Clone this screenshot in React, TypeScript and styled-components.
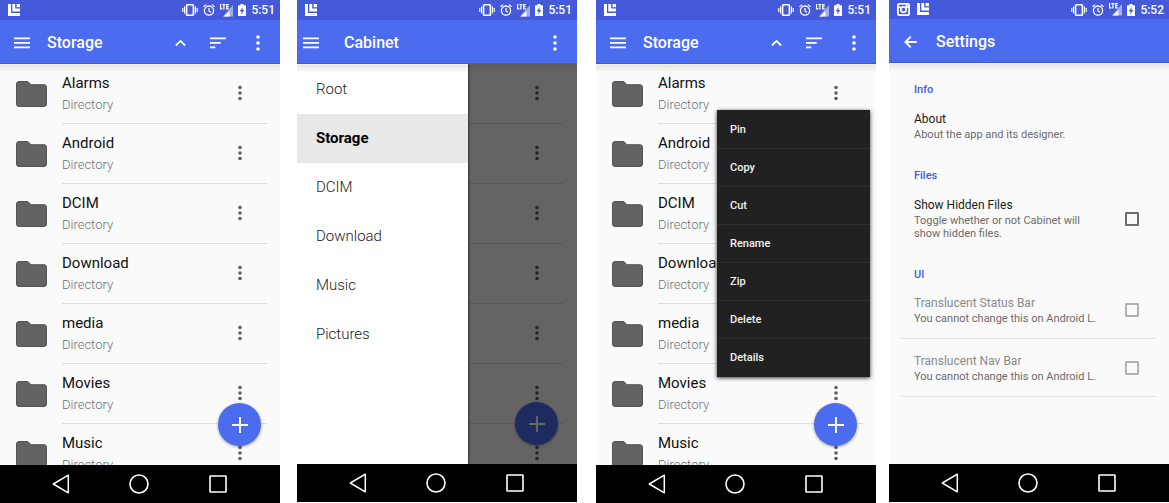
import React from "react";
import styled, { createGlobalStyle } from "styled-components";

const GlobalStyle = createGlobalStyle`
  *, *::before, *::after { box-sizing: border-box; }
  body { margin: 0; background: #fff; font-family: Roboto, "Liberation Sans", sans-serif; }
  button { padding: 0; border: 0; background: none; color: inherit; font: inherit; cursor: pointer; }
  ul, h1, h2, p { margin: 0; padding: 0; list-style: none; }
  svg { display: block; }
`;

const blue = "#4c6cf0";
const topShadow = "linear-gradient(#fff 0, #e6e6e6 1px, rgba(250, 250, 250, 0) 9px)";

const Gallery = styled.main`
  display: grid;
  grid-template-columns: 1fr 17px 1fr 19px 1fr 13px 1fr;
  height: 100vh;
`;

const Phone = styled.section<{ $column: number; $short?: boolean }>`
  grid-column: ${(p) => p.$column};
  display: flex;
  flex-direction: column;
  min-width: 0;
  min-height: 0;
  margin-bottom: ${(p) => (p.$short ? 1 : 0)}px;
`;

const StatusBar = styled.div<{ $height: number }>`
  display: flex;
  align-items: center;
  gap: 5px;
  height: ${(p) => p.$height}px;
  padding: 0 5px 0 8px;
  background: #445adb;
  color: #fff;
`;

const Notifications = styled.div`
  display: flex;
  gap: 7px;
  margin-right: auto;
`;

const Clock = styled.time`
  font-size: 12px;
  font-weight: 500;
  line-height: 16px;
`;

const Toolbar = styled.header`
  display: flex;
  align-items: center;
  height: 44px;
  padding-top: 1px;
  background: ${blue};
  box-shadow: inset 0 -1px #3f58dc;
  color: #fff;
`;

const NavButton = styled.button<{ $inset: number }>`
  flex: none;
  width: 47px;
  height: 40px;
  padding-left: ${(p) => p.$inset}px;
`;

const ScreenTitle = styled.h1`
  flex: 1;
  font-size: 16px;
  font-weight: 500;
  line-height: 20px;
`;

const ToolButton = styled.button`
  display: grid;
  place-items: center;
  flex: none;
  width: 37px;
  height: 40px;
`;

const OverflowButton = styled(ToolButton)`
  width: 44px;
`;

const Body = styled.div`
  position: relative;
  flex: 1;
  min-height: 0;
  overflow: hidden;
  background: ${topShadow}, #fafafa;
`;

const Row = styled.li`
  display: flex;
  align-items: center;
  gap: 15px;
  height: 60px;
  padding: 0 13px 0 16px;
`;

const RowContent = styled.div`
  display: flex;
  flex: 1;
  align-items: center;
  justify-content: space-between;
  height: 60px;
  padding-bottom: 2px;
  border-bottom: 1px solid #dedede;
`;

const FileName = styled.p`
  font-size: 15px;
  line-height: 20px;
  color: #111;
`;

const FileKind = styled.p`
  padding-top: 4px;
  font-size: 13px;
  font-weight: 300;
  line-height: 16px;
  color: #707070;
`;

const RowMenuButton = styled.button`
  display: grid;
  place-items: center;
  width: 54px;
  height: 40px;
  color: #5f5f5f;
`;

const Fab = styled.button`
  position: absolute;
  right: 19px;
  bottom: 19px;
  display: grid;
  place-items: center;
  width: 43px;
  height: 43px;
  border-radius: 50%;
  background: ${blue};
  color: #fff;
  box-shadow: 0 1px 3px rgba(0, 0, 0, 0.4);
`;

const Scrim = styled.div`
  position: absolute;
  inset: 0;
  background: rgba(0, 0, 0, 0.6);
`;

const Drawer = styled.nav`
  position: absolute;
  inset: 0 auto 0 0;
  width: 171px;
  padding-top: 1px;
  background: ${topShadow}, #fff;
  box-shadow: 1px 0 2px rgba(0, 0, 0, 0.5);
`;

const DrawerLink = styled.a<{ $active?: boolean }>`
  display: block;
  padding-left: 19px;
  background: ${(p) => (p.$active ? "#e8e8e8" : "transparent")};
  color: ${(p) => (p.$active ? "#000" : "#222")};
  font-size: 15px;
  font-weight: ${(p) => (p.$active ? 700 : 300)};
  line-height: 49px;
  text-decoration: none;
`;

const Popup = styled.div`
  position: absolute;
  top: 46px;
  right: 6px;
  width: 153px;
  padding-bottom: 1px;
  background: #212121;
  box-shadow: 0 1px 4px rgba(0, 0, 0, 0.8);
`;

const PopupItem = styled.button`
  display: block;
  width: 100%;
  height: 38px;
  padding-left: 13px;
  color: #f2f2f2;
  font-size: 11px;
  font-weight: 500;
  text-align: left;

  & + & { border-top: 1px solid #2e2e2e; }
`;

const Preferences = styled(Body)`
  padding-top: 5px;
`;

const GroupTitle = styled.h2`
  padding: 15px 25px 0;
  color: #3f5ce6;
  font-size: 11px;
  font-weight: 500;
  line-height: 14px;
`;

const Preference = styled.div<{ $divided?: boolean }>`
  display: flex;
  align-items: center;
  gap: 26px;
  margin: 0 13px 0 12px;
  padding: ${(p) => (p.$divided ? "13px 17px 13px 13px" : "14px 17px 13px 13px")};
  border-bottom: ${(p) => (p.$divided ? "1px solid #e2e2e2" : "0")};

  & + & { padding-top: 14px; }
`;

const PreferenceText = styled.label<{ $disabled?: boolean }>`
  flex: 1;
  color: ${(p) => (p.$disabled ? "#8a8a8a" : "#1a1a1a")};
  font-size: 12px;
  line-height: 16px;
`;

const Summary = styled.span`
  display: block;
  padding-top: 1px;
  color: #6a6a6a;
  font-size: 11px;
  line-height: 13px;
`;

const Checkbox = styled.input`
  appearance: none;
  flex: none;
  width: 14px;
  height: 14px;
  margin: 0;
  border: 2px solid #6c6c6c;
  border-radius: 1px;

  &:disabled { border-color: #b2b2b2; }
`;

const SystemNav = styled.footer`
  display: grid;
  grid-template-columns: repeat(3, 1fr);
  flex: none;
  height: 38px;
  padding: 0 23px 0 22px;
  background: #000;
  color: #fff;
`;

const SystemButton = styled.button`
  display: grid;
  place-items: center;
`;

const BoardIcon = () => (
  <svg width="12" height="12" viewBox="0 0 12 12" fill="currentColor" aria-hidden="true">
    <path d="M0 0h3v9h9v3H0z" />
    <path d="M4.300 0h2.900v4.600H12v2.900H4.300z" />
    <path d="M8.600 0H12v3.200H8.600z" />
  </svg>
);

const CameraIcon = () => (
  <svg width="13" height="13" viewBox="0 0 13 13" fill="none" stroke="currentColor" aria-hidden="true">
    <rect x="0.9" y="0.9" width="11.2" height="11.2" rx="1.2" strokeWidth="1.8" />
    <path d="M1 4.2h3.2M8.800 4.200H12" strokeWidth="1.4" />
    <circle cx="6.5" cy="6.600" r="2.700" strokeWidth="1.700" />
    <path d="M8.600 3h2.200" strokeWidth="2" />
  </svg>
);

const VibrateIcon = () => (
  <svg width="16" height="12" viewBox="0 0 16 12" fill="none" stroke="currentColor" aria-hidden="true">
    <rect x="4.600" y="0.800" width="6.800" height="10.400" rx="0.800" strokeWidth="1.600" />
    <path d="M2.600 2.500v7M13.400 2.500v7M0.800 4v4M15.200 4v4" strokeWidth="1.200" />
  </svg>
);

const AlarmIcon = () => (
  <svg width="12" height="12" viewBox="0 0 12 12" fill="none" stroke="currentColor" aria-hidden="true">
    <circle cx="6" cy="6.600" r="4.600" strokeWidth="1.300" />
    <path d="M6 4v3l2 1.200M0.500 2.800L3.200 0.600M11.500 2.800L8.800 0.600" strokeWidth="1.200" />
  </svg>
);

const SignalIcon = () => (
  <svg width="13" height="13" viewBox="0 0 13 13" aria-hidden="true">
    <path d="M13 1v11.500H3z" fill="currentColor" opacity="0.5" />
    <path d="M9.500 7v5.500H3.500z" fill="currentColor" />
    <path d="M0.600 0v4.900h1.900M2.400 0.600h3M3.900 0.600v4.800M8.800 0.600H6.700v4.300h2.100M6.700 2.700h1.900" fill="none" stroke="currentColor" strokeWidth="1.200" />
  </svg>
);

const BatteryIcon = () => (
  <svg width="8" height="12" viewBox="0 0 8 12" fill="currentColor" aria-hidden="true">
    <path d="M2.400 0h3.200v1.200H7.400q.6 0 .6.6v9.600q0 .6-.6.6H.6q-.6 0-.6-.6V1.800q0-.6.6-.6h1.800z" />
    <path d="M4.800 3L1.600 7.200h2L3.200 10.400 6.400 6h-2z" fill="#445adb" />
  </svg>
);

const MenuIcon = () => (
  <svg width="16" height="12" viewBox="0 0 16 12" fill="currentColor" aria-hidden="true">
    <path d="M0 .5h16v1.800H0zM0 5h16v1.800H0zM0 9.500h16v1.800H0z" />
  </svg>
);

const BackIcon = () => (
  <svg width="13" height="12" viewBox="0 0 13 12" fill="none" stroke="currentColor" strokeWidth="1.900" aria-hidden="true">
    <path d="M12.800 6H1.500M6.700.7L1.400 6l5.300 5.300" />
  </svg>
);

const UpIcon = () => (
  <svg width="11" height="8" viewBox="0 0 11 8" fill="none" stroke="currentColor" strokeWidth="1.800" aria-hidden="true">
    <path d="M.9 6.500L5.500 1.900l4.600 4.600" />
  </svg>
);

const SortIcon = () => (
  <svg width="16" height="12" viewBox="0 0 16 12" fill="currentColor" aria-hidden="true">
    <path d="M0 .5h16v1.800H0zM0 5h10.700v1.800H0zM0 9.500h5.300v1.800H0z" />
  </svg>
);

const DotsIcon = ({ pitch, radius }: { pitch: number; radius: number }) => (
  <svg width="4" height="18" viewBox="-2 -9 4 18" fill="currentColor" aria-hidden="true">
    <circle cy={-pitch} r={radius} />
    <circle r={radius} />
    <circle cy={pitch} r={radius} />
  </svg>
);

const FolderIcon = () => (
  <svg width="31" height="26" viewBox="0 0 31 26" aria-hidden="true">
    <path d="M3 .5h8.800l3.200 3.200H28q2.500 0 2.500 2.500V23q0 2.500-2.500 2.500H3Q.5 25.500.5 23V3Q.5.5 3 .5z" fill="#636363" stroke="#555" />
  </svg>
);

const PlusIcon = () => (
  <svg width="16" height="16" viewBox="0 0 16 16" stroke="currentColor" strokeWidth="1.900" aria-hidden="true">
    <path d="M8 0v16M0 8h16" />
  </svg>
);

const TriangleIcon = () => (
  <svg width="18" height="20" viewBox="0 0 18 20" fill="none" stroke="currentColor" strokeWidth="1.500" strokeLinejoin="round" aria-hidden="true">
    <path d="M16.300 1.200v17.600L1.300 10z" />
  </svg>
);

const CircleIcon = () => (
  <svg width="20" height="20" viewBox="0 0 20 20" fill="none" stroke="currentColor" strokeWidth="1.600" aria-hidden="true">
    <circle cx="10" cy="10" r="9" />
  </svg>
);

const SquareIcon = () => (
  <svg width="18" height="18" viewBox="0 0 18 18" fill="none" stroke="currentColor" strokeWidth="1.600" aria-hidden="true">
    <rect x="1" y="1" width="16" height="16" rx="0.500" />
  </svg>
);

const Status = ({ time, camera, height = 20 }: { time: string; camera?: boolean; height?: number }) => (
  <StatusBar $height={height}>
    <Notifications>
      {camera && <CameraIcon />}
      <BoardIcon />
    </Notifications>
    <VibrateIcon />
    <AlarmIcon />
    <SignalIcon />
    <BatteryIcon />
    <Clock>{time}</Clock>
  </StatusBar>
);

const Navigation = () => (
  <SystemNav>
    <SystemButton aria-label="Back"><TriangleIcon /></SystemButton>
    <SystemButton aria-label="Home"><CircleIcon /></SystemButton>
    <SystemButton aria-label="Recent apps"><SquareIcon /></SystemButton>
  </SystemNav>
);

const Overflow = () => (
  <OverflowButton aria-label="More options"><DotsIcon pitch={6} radius={1.8} /></OverflowButton>
);

const folders = ["Alarms", "Android", "DCIM", "Download", "media", "Movies", "Music"];
const places = ["Root", "Storage", "DCIM", "Download", "Music", "Pictures"];
const actions = ["Pin", "Copy", "Cut", "Rename", "Zip", "Delete", "Details"];

const Files = () => (
  <>
    <ul>
      {folders.map((name) => (
        <Row key={name}>
          <FolderIcon />
          <RowContent>
            <div>
              <FileName>{name}</FileName>
              <FileKind>Directory</FileKind>
            </div>
            <RowMenuButton aria-label={`Actions for ${name}`}><DotsIcon pitch={5.5} radius={1.8} /></RowMenuButton>
          </RowContent>
        </Row>
      ))}
    </ul>
    <Fab aria-label="Add"><PlusIcon /></Fab>
  </>
);

const StorageHeader = () => (
  <>
    <Status time="5:51" />
    <Toolbar>
      <NavButton $inset={14} aria-label="Menu"><MenuIcon /></NavButton>
      <ScreenTitle>Storage</ScreenTitle>
      <ToolButton aria-label="Up"><UpIcon /></ToolButton>
      <ToolButton aria-label="Sort"><SortIcon /></ToolButton>
      <Overflow />
    </Toolbar>
  </>
);

export default function App() {
  return (
    <>
      <GlobalStyle />
      <Gallery>
        <Phone $column={1}>
          <StorageHeader />
          <Body><Files /></Body>
          <Navigation />
        </Phone>

        <Phone $column={3} $short>
          <Status time="5:51" />
          <Toolbar>
            <NavButton $inset={6} aria-label="Menu"><MenuIcon /></NavButton>
            <ScreenTitle>Cabinet</ScreenTitle>
            <Overflow />
          </Toolbar>
          <Body>
            <Files />
            <Scrim />
            <Drawer>
              {places.map((place) => (
                <DrawerLink key={place} href="#" $active={place === "Storage"}>{place}</DrawerLink>
              ))}
            </Drawer>
          </Body>
          <Navigation />
        </Phone>

        <Phone $column={5}>
          <StorageHeader />
          <Body>
            <Files />
            <Popup role="menu">
              {actions.map((action) => (
                <PopupItem key={action} role="menuitem">{action}</PopupItem>
              ))}
            </Popup>
          </Body>
          <Navigation />
        </Phone>

        <Phone $column={7} $short>
          <Status time="5:52" camera height={19} />
          <Toolbar>
            <NavButton $inset={15} aria-label="Back"><BackIcon /></NavButton>
            <ScreenTitle>Settings</ScreenTitle>
          </Toolbar>
          <Preferences>
            <GroupTitle>Info</GroupTitle>
            <Preference>
              <PreferenceText as="div">
                About
                <Summary>About the app and its designer.</Summary>
              </PreferenceText>
            </Preference>
            <GroupTitle>Files</GroupTitle>
            <Preference>
              <PreferenceText htmlFor="hidden-files">
                Show Hidden Files
                <Summary>Toggle whether or not Cabinet will show hidden files.</Summary>
              </PreferenceText>
              <Checkbox type="checkbox" id="hidden-files" />
            </Preference>
            <GroupTitle>UI</GroupTitle>
            <Preference $divided>
              <PreferenceText $disabled htmlFor="status-bar">
                Translucent Status Bar
                <Summary>You cannot change this on Android L.</Summary>
              </PreferenceText>
              <Checkbox type="checkbox" id="status-bar" disabled />
            </Preference>
            <Preference $divided>
              <PreferenceText $disabled htmlFor="nav-bar">
                Translucent Nav Bar
                <Summary>You cannot change this on Android L.</Summary>
              </PreferenceText>
              <Checkbox type="checkbox" id="nav-bar" disabled />
            </Preference>
          </Preferences>
          <Navigation />
        </Phone>
      </Gallery>
    </>
  );
}
